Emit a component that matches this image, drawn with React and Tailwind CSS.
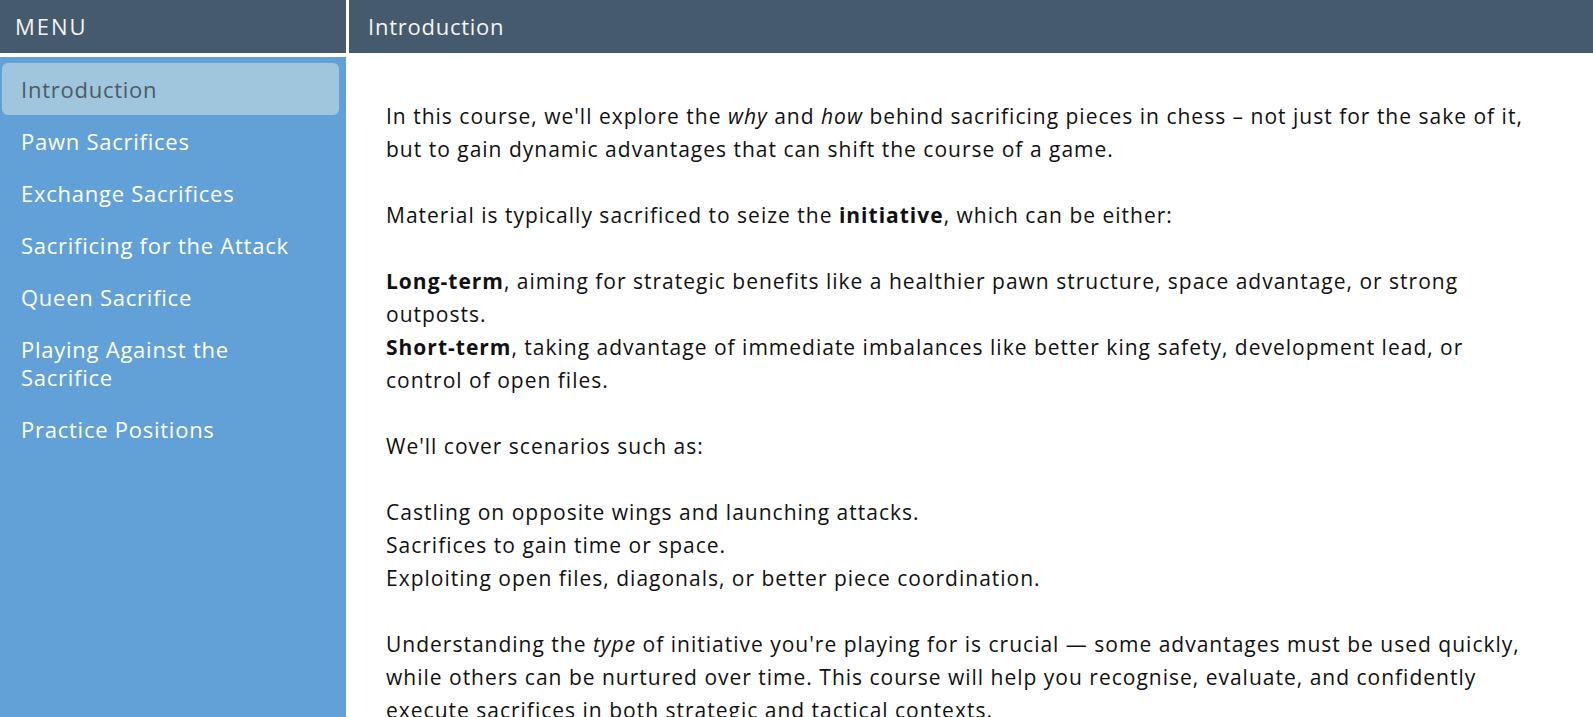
import { useState } from "react";

const menuItems = [
  "Introduction",
  "Pawn Sacrifices",
  "Exchange Sacrifices",
  "Sacrificing for the Attack",
  "Queen Sacrifice",
  "Playing Against the Sacrifice",
  "Practice Positions",
];

const Sidebar = ({ active, onSelect }) => {
  return (
    <aside className="w-[346px] shrink-0 flex flex-col">
      <div className="h-[53px] shrink-0 bg-[#455a6c] text-[#f2f4f6] pl-[15px] flex items-center text-[22px] tracking-[2px]">
        MENU
      </div>
      <nav className="mt-[4px] flex-1 bg-[#62a1d8] pt-[6px] pl-[2px] pr-[7px]">
        {menuItems.map((item) => (
          <div
            key={item}
            onClick={() => onSelect(item)}
            className={`px-[19px] py-3 text-[22px] leading-7 tracking-[0.75px] rounded-md cursor-pointer ${
              active === item
                ? "bg-[#9fc6dc] text-[#4b5a69]"
                : "text-white"
            }`}
          >
            {item}
          </div>
        ))}
      </nav>
    </aside>
  );
};

const App = () => {
  const [active, setActive] = useState("Introduction");

  return (
    <div className="flex h-screen overflow-hidden bg-white font-['Open_Sans',sans-serif]">
      <Sidebar active={active} onSelect={setActive} />

      <main className="ml-[3px] flex-1 flex flex-col min-w-0">
        <div className="h-[53px] shrink-0 bg-[#455a6c] text-[#f2f4f6] pl-[19px] flex items-center text-[22px] tracking-[0.75px]">
          {active}
        </div>

        <div className="flex-1 overflow-hidden pl-[37px] pr-[58px] pt-[47px] text-[21px] leading-[33px] tracking-[1px] text-[#111]">
          <p className="mb-[33px]">
            In this course, we'll explore the <em>why</em> and <em>how</em>{" "}
            behind sacrificing pieces in chess – not just for the sake of it,
            but to gain dynamic advantages that can shift the course of a game.
          </p>

          <p className="mb-[33px]">
            Material is typically sacrificed to seize the{" "}
            <strong>initiative</strong>, which can be either:
          </p>

          <div className="mb-[33px]">
            <p>
              <strong>Long-term</strong>, aiming for strategic benefits like a
              healthier pawn structure, space advantage, or strong outposts.
            </p>
            <p>
              <strong>Short-term</strong>, taking advantage of immediate
              imbalances like better king safety, development lead, or control
              of open files.
            </p>
          </div>

          <p className="mb-[33px]">We'll cover scenarios such as:</p>

          <div className="mb-[33px]">
            <p>Castling on opposite wings and launching attacks.</p>
            <p>Sacrifices to gain time or space.</p>
            <p>Exploiting open files, diagonals, or better piece coordination.</p>
          </div>

          <p>
            Understanding the <em>type</em> of initiative you're playing for is
            crucial — some advantages must be used quickly, while others can be
            nurtured over time. This course will help you recognise, evaluate,
            and confidently execute sacrifices in both strategic and tactical
            contexts.
          </p>
        </div>
      </main>
    </div>
  );
};

export default App;
